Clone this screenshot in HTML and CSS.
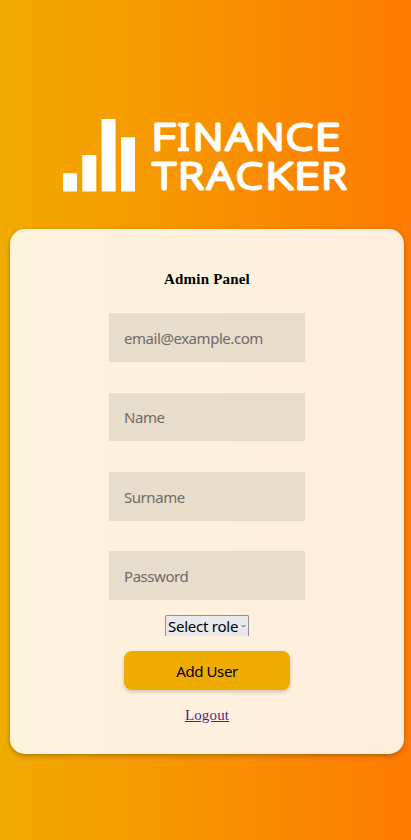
FILE: index.html
```html
<!DOCTYPE html>
<html lang="en">
<head>
<meta charset="utf-8">
<title>Finance Tracker</title>
<link rel="stylesheet" href="styles.css">
</head>
<body>
<svg class="logo" viewBox="60 115 292 80" role="img" aria-label="Finance Tracker">
<path class="bars" d="M63 173.2h14v18.2H63zM82.3 155h14v36.4h-14zM101.6 119h14v72.4h-14zM121 137.2h14v54.2h-14z"/>
<g class="wordmark">
<text y="150"><tspan x="151.4" textLength="23.4" lengthAdjust="spacingAndGlyphs">F</tspan><tspan class="serifed" x="177.3" textLength="12.5" lengthAdjust="spacingAndGlyphs">I</tspan><tspan x="192.9" textLength="30.2" lengthAdjust="spacingAndGlyphs">N</tspan><tspan x="226" textLength="26" lengthAdjust="spacingAndGlyphs">A</tspan><tspan x="255" textLength="29.3" lengthAdjust="spacingAndGlyphs">N</tspan><tspan x="285.9" textLength="26.9" lengthAdjust="spacingAndGlyphs">C</tspan><tspan x="315.2" textLength="25" lengthAdjust="spacingAndGlyphs">E</tspan></text>
<text y="189.2"><tspan x="152.8" textLength="22.8" lengthAdjust="spacingAndGlyphs">T</tspan><tspan x="178.3" textLength="25.4" lengthAdjust="spacingAndGlyphs">R</tspan><tspan x="207.3" textLength="26.1" lengthAdjust="spacingAndGlyphs">A</tspan><tspan x="236" textLength="26.4" lengthAdjust="spacingAndGlyphs">C</tspan><tspan x="265.4" textLength="27" lengthAdjust="spacingAndGlyphs">K</tspan><tspan x="294.5" textLength="25.2" lengthAdjust="spacingAndGlyphs">E</tspan><tspan x="321.4" textLength="24.8" lengthAdjust="spacingAndGlyphs">R</tspan></text>
</g>
</svg>
<form class="card">
<h1>Admin Panel</h1>
<div class="fields">
<input type="email" placeholder="email@example.com">
<input type="text" placeholder="Name">
<input type="text" placeholder="Surname">
<input type="password" placeholder="Password">
</div>
<div class="role"><span>Select role</span><svg width="5" height="4" viewBox="0 0 5 4"><path d="M.5 1l2 2 2-2"/></svg></div>
<button type="button">Add User</button>
<a href="#">Logout</a>
</form>
</body>
</html>
```
FILE: styles.css
```css
* { box-sizing: border-box; }
body {
  margin: 0;
  height: 840px;
  padding: 115px 7px 0 10px;
  overflow: hidden;
  background: linear-gradient(to right, #f0ab00, #ff7a00);
  font-family: "Liberation Serif", serif;
}
.logo { display: block; width: 292px; height: 80px; margin-left: 50px; overflow: visible; }
.bars { fill: #fff; }
.wordmark {
  font: 300 37.5px "Open Sans", sans-serif;
  fill: #fff;
  stroke: #fff;
  stroke-width: 2.9px;
  stroke-linejoin: round;
}
.serifed { font-family: "Noto Sans", sans-serif; stroke-width: 2.5px; }
.card {
  display: flex;
  flex-direction: column;
  align-items: center;
  height: 525px;
  margin-top: 34px;
  padding-top: 41px;
  border-radius: 15px;
  background: rgba(255, 255, 255, .87);
  box-shadow: 0 2px 5px rgba(0, 0, 0, .26);
}
h1 { margin: 0; font-size: 15px; line-height: 18px; letter-spacing: .2px; }
.fields { display: grid; gap: 30.6px; margin-top: 25.3px; }
input {
  width: 196px;
  height: 48.7px;
  padding: 1px 15px 0;
  border: 0;
  border-radius: 0;
  background: rgba(0, 0, 0, .085);
  font: 15px "Noto Sans", sans-serif;
  letter-spacing: -.45px;
}
input::placeholder { color: #706b66; opacity: 1; }
.role {
  display: flex;
  align-items: center;
  justify-content: space-between;
  width: 84px;
  height: 21px;
  margin-top: 14.9px;
  padding: 0 2px;
  border: 1px solid #8f8f9d;
  border-bottom: 0;
  border-radius: 2px 2px 0 0;
  background: #e9e9ed;
  font: 15px/18px "Noto Sans", sans-serif;
  letter-spacing: -.25px;
  white-space: nowrap;
}
.role path { fill: none; stroke: #555; }
button {
  width: 166px;
  height: 39px;
  margin-top: 15px;
  padding: 2px 0 0;
  border: 0;
  border-radius: 8px;
  background: #f0ab00;
  color: #000;
  font: 15px "Noto Sans", sans-serif;
  letter-spacing: -.4px;
  box-shadow: 0 2px 4px rgba(0, 0, 0, .2);
}
a { margin-top: 16px; color: #551a8b; font-size: 15px; line-height: 18px; letter-spacing: .15px; }
```
